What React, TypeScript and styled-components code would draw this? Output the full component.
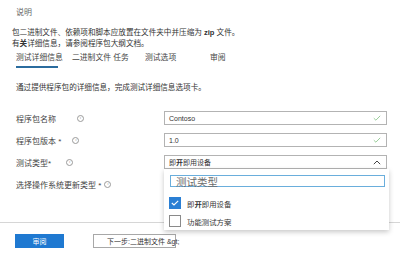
import styled, { createGlobalStyle } from "styled-components";

const GlobalStyle = createGlobalStyle`
  html, body {
    margin: 0;
    background: #ffffff;
  }
  body {
    font-family: "Liberation Sans", "Noto Sans CJK SC", sans-serif;
    color: #333333;
    width: 400px;
    height: 256px;
    overflow: hidden;
  }
`;

const Page = styled.div`
  display: flex;
  flex-direction: column;
  padding-top: 8px;
`;

const Heading = styled.div`
  font-size: 8px;
  line-height: 10px;
  color: #666666;
  padding-left: 16px;
`;

const Lead = styled.p`
  margin: 8.5px 0 0 12px;
  font-size: 7.6px;
  line-height: 11px;
  color: #333333;
`;

const TabBar = styled.div`
  display: grid;
  grid-template-columns: 56px 73px 65px auto;
  margin-top: 4.5px;
  padding-left: 16px;
`;

const Tab = styled.div<{ $active?: boolean }>`
  font-size: 7.8px;
  line-height: 10px;
  color: #444444;
  padding-bottom: 3px;
  justify-self: start;
  border-bottom: 2px solid ${({ $active }) => ($active ? "#2b6c9e" : "transparent")};
  ${({ $active }) => ($active ? "width: 42px;" : "")}
  white-space: nowrap;
`;

const Intro = styled.div`
  margin-top: 15px;
  padding-left: 16px;
  font-size: 7.6px;
  line-height: 10px;
  color: #333333;
`;

const Form = styled.div`
  display: flex;
  flex-direction: column;
  gap: 8px;
  margin-top: 18px;
`;

const Row = styled.div`
  display: grid;
  grid-template-columns: 164px 223px;
  height: 14px;
  align-items: center;
`;

const Label = styled.div<{ $gap: number }>`
  display: flex;
  align-items: center;
  gap: ${({ $gap }) => $gap}px;
  padding-left: 16px;
  font-size: 8px;
  color: #444444;
  white-space: nowrap;
`;

const InfoDot = styled.span`
  width: 5px;
  height: 5px;
  border: 1px solid #9a9a9a;
  border-radius: 50%;
  display: inline-flex;
  align-items: center;
  justify-content: center;
  font-size: 4px;
  line-height: 1;
  color: #888888;
`;

const Field = styled.div`
  position: relative;
  height: 14px;
  box-sizing: border-box;
  border: 1px solid #b3b3b3;
  display: flex;
  align-items: center;
  justify-content: space-between;
  padding: 0 5px 0 4px;
  font-size: 7px;
  color: #333333;
`;

const Panel = styled.div`
  position: absolute;
  top: 13px;
  left: -1px;
  width: 225px;
  box-sizing: border-box;
  background: #ffffff;
  box-shadow: 0 2px 5px rgba(0, 0, 0, 0.22);
  padding: 6px 4px 3px 6px;
  display: flex;
  flex-direction: column;
  z-index: 2;
`;

const Search = styled.div`
  height: 12px;
  box-sizing: border-box;
  border: 1px solid #6aaedc;
  display: flex;
  align-items: center;
  padding-left: 5px;
  font-size: 10.5px;
  color: #6b6b6b;
  font-family: "Noto Sans CJK SC", sans-serif;
`;

const Options = styled.div`
  display: flex;
  flex-direction: column;
  gap: 6px;
  margin-top: 10px;
`;

const Option = styled.div`
  display: flex;
  align-items: center;
  gap: 6px;
  height: 12px;
  padding-left: -1px;
  font-size: 7.4px;
  color: #333333;
`;

const Box = styled.span<{ $checked?: boolean }>`
  width: 12px;
  height: 12px;
  box-sizing: border-box;
  border: 1px solid ${({ $checked }) => ($checked ? "#2a7fd4" : "#8a8a8a")};
  background: ${({ $checked }) => ($checked ? "#2a7fd4" : "#ffffff")};
  display: flex;
  align-items: center;
  justify-content: center;
  margin-left: -1px;
`;

const Divider = styled.div`
  margin-top: 31px;
  height: 1px;
  background: #d6d6d6;
`;

const Actions = styled.div`
  display: flex;
  align-items: center;
  gap: 29px;
  margin-top: 11px;
  padding-left: 15px;
`;

const Button = styled.button<{ $primary?: boolean }>`
  height: 14px;
  box-sizing: border-box;
  font-family: inherit;
  font-size: 7px;
  white-space: nowrap;
  overflow: visible;
  cursor: pointer;
  display: flex;
  align-items: center;
  ${({ $primary }) =>
    $primary
      ? `
    width: 49px;
    background: #1f79d1;
    border: 1px solid #1f79d1;
    color: #ffffff;
    justify-content: center;
    padding: 0;
  `
      : `
    width: 83px;
    background: #ffffff;
    border: 1px solid #a8a8a8;
    color: #333333;
    justify-content: flex-start;
    padding: 0 0 0 13px;
  `}
`;

const Bold = styled.b`
  font-weight: 700;
`;

function Check() {
  return (
    <svg width="8" height="6" viewBox="0 0 8 6">
      <path d="M0.8 3.2 L2.9 5.2 L7.2 0.8" fill="none" stroke="#9acd9a" strokeWidth="1" />
    </svg>
  );
}

function ChevronUp() {
  return (
    <svg width="8" height="5" viewBox="0 0 8 5">
      <path d="M0.8 4.2 L4 1 L7.2 4.2" fill="none" stroke="#444" strokeWidth="1" />
    </svg>
  );
}

function Tick() {
  return (
    <svg width="8" height="6" viewBox="0 0 8 6">
      <path d="M0.8 3 L3 5 L7.2 0.8" fill="none" stroke="#ffffff" strokeWidth="1.1" />
    </svg>
  );
}

const Info = () => <InfoDot>i</InfoDot>;

const Device = () => (
  <span>
    即<Bold>开</Bold>即用设备
  </span>
);

export default function App() {
  return (
    <>
      <GlobalStyle />
      <Page>
        <Heading>说明</Heading>
        <Lead>
          包二进制文件、依赖项和脚本应放置在文件夹中并压缩为 <Bold>zip</Bold> 文件。
          <br />
          有<Bold>关</Bold>详细信息，请参阅程序包大纲文档。
        </Lead>
        <TabBar>
          <Tab $active>测试详细信息</Tab>
          <Tab>二进制文件 任务</Tab>
          <Tab>测试选项</Tab>
          <Tab>审阅</Tab>
        </TabBar>
        <Intro>通过提供程序包的详细信息，完成测试详细信息选项卡。</Intro>
        <Form>
          <Row>
            <Label $gap={21}>
              程序包名称 <Info />
            </Label>
            <Field>
              Contoso
              <Check />
            </Field>
          </Row>
          <Row>
            <Label $gap={11}>
              程序包版本 * <Info />
            </Label>
            <Field>
              1.0
              <Check />
            </Field>
          </Row>
          <Row>
            <Label $gap={15}>
              测试类型* <Info />
            </Label>
            <Field>
              <Device />
              <ChevronUp />
              <Panel>
                <Search>测试类型</Search>
                <Options>
                  <Option>
                    <Box $checked>
                      <Tick />
                    </Box>
                    <Device />
                  </Option>
                  <Option>
                    <Box />
                    功能测试方案
                  </Option>
                </Options>
              </Panel>
            </Field>
          </Row>
          <Row>
            <Label $gap={3}>
              选择操作系统更新类型 * <Info />
            </Label>
          </Row>
        </Form>
        <Divider />
        <Actions>
          <Button $primary>审阅</Button>
          <Button>{"下一步:二进制文件 &gt;"}</Button>
        </Actions>
      </Page>
    </>
  );
}
